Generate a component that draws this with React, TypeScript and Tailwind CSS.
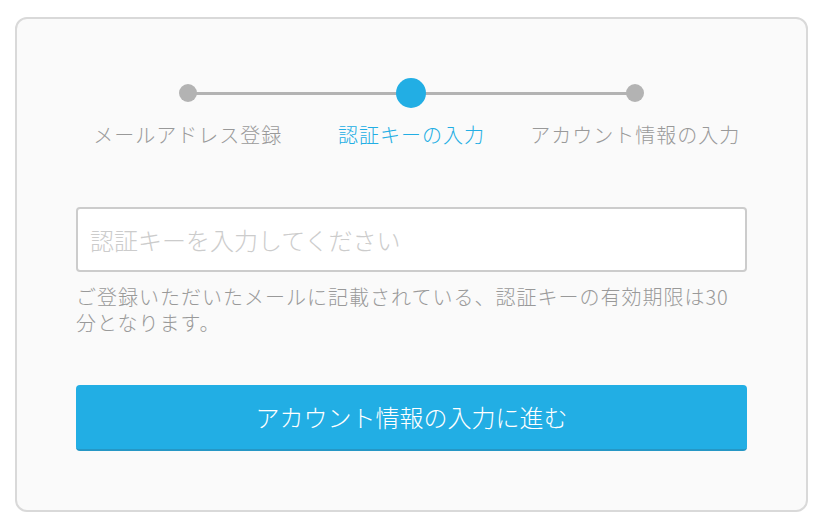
import { useState } from "react";

const FONT = { fontFamily: '"Noto Sans CJK JP", "Noto Sans", sans-serif' };

const steps = [
  { label: "メールアドレス登録", active: false },
  { label: "認証キーの入力", active: true },
  { label: "アカウント情報の入力", active: false },
];

export default function App() {
  const [key, setKey] = useState("");

  return (
    <div className="min-h-screen bg-white pl-[15px] pt-[17px]" style={FONT}>
      <div className="w-[793px] rounded-[12px] border-2 border-[#d9d9d9] bg-[#fafafa] px-[59px] pt-[59px] pb-[59px]">
        {/* Stepper */}
        <div className="relative">
          <div className="absolute left-[112px] right-[112px] top-[14px] h-[3px] bg-[#b3b3b3]" />
          <div className="relative grid grid-cols-3">
            {steps.map((s) => (
              <div key={s.label} className="flex h-[30px] items-center justify-center">
                {s.active ? (
                  <div className="h-[30px] w-[30px] rounded-full bg-[#22aee4]" />
                ) : (
                  <div className="h-[18px] w-[18px] rounded-full bg-[#b3b3b3]" />
                )}
              </div>
            ))}
          </div>
          <div className="mt-[13px] grid grid-cols-3">
            {steps.map((s) => (
              <div
                key={s.label}
                className={
                  "text-center text-[20px] font-light leading-[28px] tracking-[1px] " +
                  (s.active ? "text-[#22aee4]" : "text-[#999999]")
                }
              >
                {s.label}
              </div>
            ))}
          </div>
        </div>

        {/* Input */}
        <input
          value={key}
          onChange={(e) => setKey(e.target.value)}
          placeholder="認証キーを入力してください"
          className="mt-[58px] block h-[65px] w-full rounded-[4px] border-2 border-[#cccccc] bg-white px-[12px] text-[24px] font-light text-[#555] outline-none placeholder:text-[#cccccc]"
          style={FONT}
        />
        <p className="mt-[12px] text-[20px] font-light leading-[26px] tracking-[1px] text-[#999999]">
          ご登録いただいたメールに記載されている、認証キーの有効期限は30分となります。
        </p>

        {/* Submit */}
        <button
          className="mt-[49px] flex h-[66px] w-full items-center justify-center rounded-[4px] border-b-2 border-[#2597c5] bg-[#22aee4] text-[24px] font-light text-white"
          style={FONT}
        >
          アカウント情報の入力に進む
        </button>
      </div>
    </div>
  );
}
